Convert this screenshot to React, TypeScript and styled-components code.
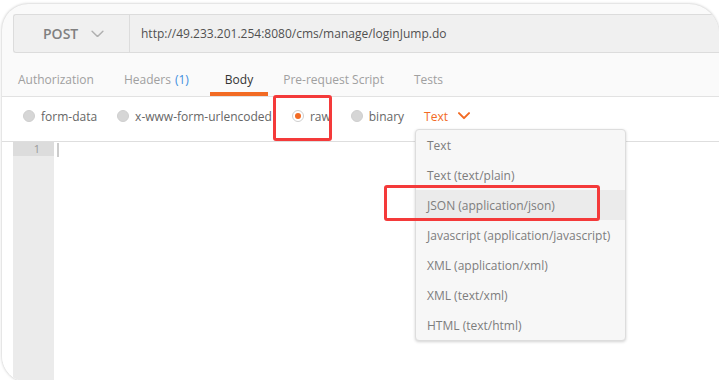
import React from "react";
import styled, { createGlobalStyle } from "styled-components";

const GlobalStyle = createGlobalStyle`
  html, body { margin: 0; padding: 0; background: #ffffff; }
  body { font-family: "Open Sans", "Liberation Sans", sans-serif; overflow: hidden; }
  * { box-sizing: border-box; }
`;

const Card = styled.div`
  position: relative;
  margin: 4px 0 0 2px;
  width: 717px;
  height: 378px;
  background: #fafafa;
  border-radius: 26px 30px 0 26px;
  box-shadow: 0 0 3px rgba(0, 0, 0, 0.28);
  overflow: hidden;
  display: flex;
  flex-direction: column;
`;

const UrlBar = styled.div`
  margin: 10px 0 0 11px;
  height: 39px;
  display: flex;
  align-items: stretch;
  background: #f0f0f0;
  border: 1px solid #dcdcdc;
  border-right: none;
  border-radius: 3px 0 0 3px;
`;

const Method = styled.div`
  width: 116px;
  display: flex;
  align-items: center;
  padding-left: 29px;
  gap: 13px;
  border-right: 1px solid #dcdcdc;
  font-size: 14px;
  font-weight: 600;
  color: #808080;
`;

const UrlText = styled.div`
  display: flex;
  align-items: center;
  padding-left: 11px;
  font-size: 12px;
  color: #505050;
`;

const Tabs = styled.div`
  height: 44px;
  display: flex;
  padding-left: 1px;
  border-bottom: 1px solid #e2e2e2;
`;

const Tab = styled.div<{ $active?: boolean }>`
  position: relative;
  display: flex;
  align-items: center;
  padding: 10px 15px 0;
  font-size: 12px;
  color: ${(p) => (p.$active ? "#333333" : "#a0a0a0")};
  &::after {
    content: "";
    position: absolute;
    left: 0;
    right: 0;
    bottom: 0;
    height: 4px;
    background: ${(p) => (p.$active ? "#f26b24" : "transparent")};
  }
`;

const Count = styled.span`
  color: #3d8fe0;
  margin: 0 6px 0 4px;
`;

const BodyTypes = styled.div`
  height: 45px;
  display: flex;
  align-items: center;
  padding: 0 0 6px 21px;
  background: #ffffff;
  border-bottom: 1px solid #dedede;
  font-size: 12px;
  color: #666666;
`;

const Option = styled.div`
  display: flex;
  align-items: center;
  gap: 6px;
  margin-right: 20px;
`;

const Radio = styled.span<{ $on?: boolean }>`
  width: 12px;
  height: 12px;
  border-radius: 50%;
  background: ${(p) => (p.$on ? "#ffffff" : "#d6d6d6")};
  border: 1px solid #cfcfcf;
  display: flex;
  align-items: center;
  justify-content: center;
  &::after {
    content: "";
    width: 6px;
    height: 6px;
    border-radius: 50%;
    background: ${(p) => (p.$on ? "#f26b24" : "transparent")};
  }
`;

const TypeSelect = styled.div`
  display: flex;
  align-items: center;
  gap: 10px;
  color: #f26b24;
`;

const Editor = styled.div`
  flex: 1;
  display: flex;
  background: #ffffff;
  padding-left: 11px;
`;

const Gutter = styled.div`
  width: 41px;
  background: #ebebeb;
  display: flex;
  flex-direction: column;
`;

const LineNo = styled.div`
  height: 14px;
  background: #dcdcdc;
  text-align: right;
  padding-right: 14px;
  font-size: 11px;
  line-height: 14px;
  color: #999999;
`;

const Code = styled.div`
  flex: 1;
  padding: 1px 0 0 3px;
`;

const Cursor = styled.div`
  width: 2px;
  height: 14px;
  background: #cccccc;
`;

const Menu = styled.div`
  position: absolute;
  left: 413px;
  top: 125px;
  width: 211px;
  background: #f7f7f7;
  border: 1px solid #dddddd;
  border-radius: 4px;
  box-shadow: 0 1px 3px rgba(0, 0, 0, 0.18);
  display: flex;
  flex-direction: column;
`;

const MenuItem = styled.div<{ $hl?: boolean }>`
  height: 30px;
  display: flex;
  align-items: center;
  padding-left: 11px;
  font-size: 12px;
  color: #7d7d7d;
  background: ${(p) => (p.$hl ? "#ebebeb" : "transparent")};
`;

const Mark = styled.div<{ $x: number; $y: number; $w: number; $h: number }>`
  position: absolute;
  left: ${(p) => p.$x}px;
  top: ${(p) => p.$y}px;
  width: ${(p) => p.$w}px;
  height: ${(p) => p.$h}px;
  border: 3px solid #f43a3a;
  border-radius: 3px;
`;

const Chevron = ({ color, w, sw }: { color: string; w: number; sw: number }) => (
  <svg width={w} height={w * 0.6} viewBox="0 0 12 7" fill="none">
    <path d="M1 1 L6 6 L11 1" stroke={color} strokeWidth={sw} strokeLinecap="round" strokeLinejoin="round" />
  </svg>
);

const menuItems = [
  "Text",
  "Text (text/plain)",
  "JSON (application/json)",
  "Javascript (application/javascript)",
  "XML (application/xml)",
  "XML (text/xml)",
  "HTML (text/html)",
];

export default function App() {
  return (
    <>
      <GlobalStyle />
      <Card>
        <UrlBar>
          <Method>
            POST
            <Chevron color="#b0b0b0" w={13} sw={1.3} />
          </Method>
          <UrlText>http://49.233.201.254:8080/cms/manage/loginJump.do</UrlText>
        </UrlBar>
        <Tabs>
          <Tab>Authorization</Tab>
          <Tab>
            Headers<Count>(1)</Count>
          </Tab>
          <Tab $active>Body</Tab>
          <Tab>Pre-request Script</Tab>
          <Tab>Tests</Tab>
        </Tabs>
        <BodyTypes>
          <Option>
            <Radio />
            form-data
          </Option>
          <Option>
            <Radio />
            x-www-form-urlencoded
          </Option>
          <Option>
            <Radio $on />
            raw
          </Option>
          <Option>
            <Radio />
            binary
          </Option>
          <TypeSelect>
            Text
            <Chevron color="#f26b24" w={12} sw={2} />
          </TypeSelect>
        </BodyTypes>
        <Editor>
          <Gutter>
            <LineNo>1</LineNo>
          </Gutter>
          <Code>
            <Cursor />
          </Code>
        </Editor>
        <Menu>
          {menuItems.map((m, i) => (
            <MenuItem key={m} $hl={i === 2}>
              {m}
            </MenuItem>
          ))}
        </Menu>
        <Mark $x={271} $y={91} $w={59} $h={46} />
        <Mark $x={382} $y={181} $w={216} $h={36} />
      </Card>
    </>
  );
}
